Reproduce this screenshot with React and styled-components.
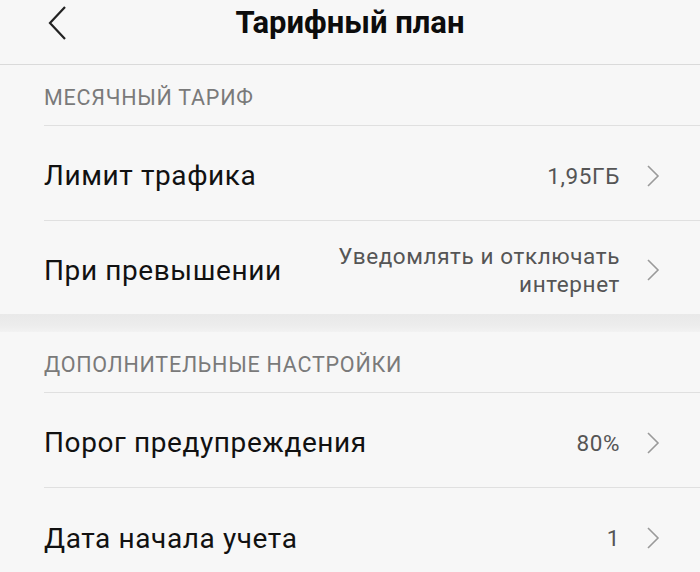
import React from 'react'
import styled, { createGlobalStyle } from 'styled-components'

const Global = createGlobalStyle`
  html, body {
    margin: 0;
    padding: 0;
    background: #f7f7f7;
  }
  body {
    font-family: Roboto, "Noto Sans", sans-serif;
    color: #111;
  }
`

const Screen = styled.div`
  width: 700px;
  height: 572px;
  overflow: hidden;
  background: #f7f7f7;
`

const Header = styled.header`
  height: 65px;
  box-sizing: border-box;
  padding-bottom: 19px;
  border-bottom: 1px solid #dadada;
  display: grid;
  grid-template-columns: 120px 1fr 120px;
  align-items: center;
`

const Back = styled.div`
  padding-left: 47px;
  display: flex;
  align-items: center;
`

const Title = styled.h1`
  margin: 0;
  text-align: center;
  font-size: 31px;
  font-weight: 700;
  color: #0c0c0c;
`

const Section = styled.div`
  padding-left: 44px;
`

const SectionTitle = styled.div`
  height: 61px;
  box-sizing: border-box;
  padding-top: 4px;
  display: flex;
  align-items: center;
  border-bottom: 1px solid #e0e0e0;
  font-size: 21.5px;
  color: #7a7a7a;
  letter-spacing: 0.75px;
`

const Row = styled.div`
  height: ${p => p.height || 95}px;
  box-sizing: border-box;
  padding-top: 5px;
  display: flex;
  align-items: center;
  padding-right: 40px;
  border-bottom: ${p => (p.last ? 'none' : '1px solid #e0e0e0')};
`

const Label = styled.div`
  flex: 1;
  font-size: 28px;
  color: #111;
  letter-spacing: 0.6px;
`

const Value = styled.div`
  text-align: right;
  font-size: 22.5px;
  line-height: 28px;
  color: #555;
  letter-spacing: 0.6px;
  margin-right: 26px;
`

const Band = styled.div`
  height: 18px;
  background: linear-gradient(#e9e9e9, #ececec 60%, #f2f2f2);
`

const Chevron = () => (
  <svg width='14' height='24' viewBox='0 0 14 24'>
    <path d='M2 2 L12 12 L2 22' fill='none' stroke='#9a9a9a' strokeWidth='1.6' />
  </svg>
)

const BackIcon = () => (
  <svg width='20' height='34' viewBox='0 0 20 34'>
    <path d='M18 1 L3 17 L18 33' fill='none' stroke='#222' strokeWidth='2.2' />
  </svg>
)

const Item = ({ label, value, height, last }) => (
  <Row height={height} last={last}>
    <Label>{label}</Label>
    <Value>{value}</Value>
    <Chevron />
  </Row>
)

export default function App () {
  return (
    <Screen>
      <Global />
      <Header>
        <Back><BackIcon /></Back>
        <Title>Тарифный план</Title>
        <div />
      </Header>
      <Section>
        <SectionTitle>МЕСЯЧНЫЙ ТАРИФ</SectionTitle>
        <Item label='Лимит трафика' value='1,95ГБ' />
        <Item
          label='При превышении'
          value={<>Уведомлять и отключать<br />интернет</>}
          height={93}
          last
        />
      </Section>
      <Band />
      <Section>
        <SectionTitle>ДОПОЛНИТЕЛЬНЫЕ НАСТРОЙКИ</SectionTitle>
        <Item label='Порог предупреждения' value='80%' />
        <Item label='Дата начала учета' value='1' last />
      </Section>
    </Screen>
  )
}
